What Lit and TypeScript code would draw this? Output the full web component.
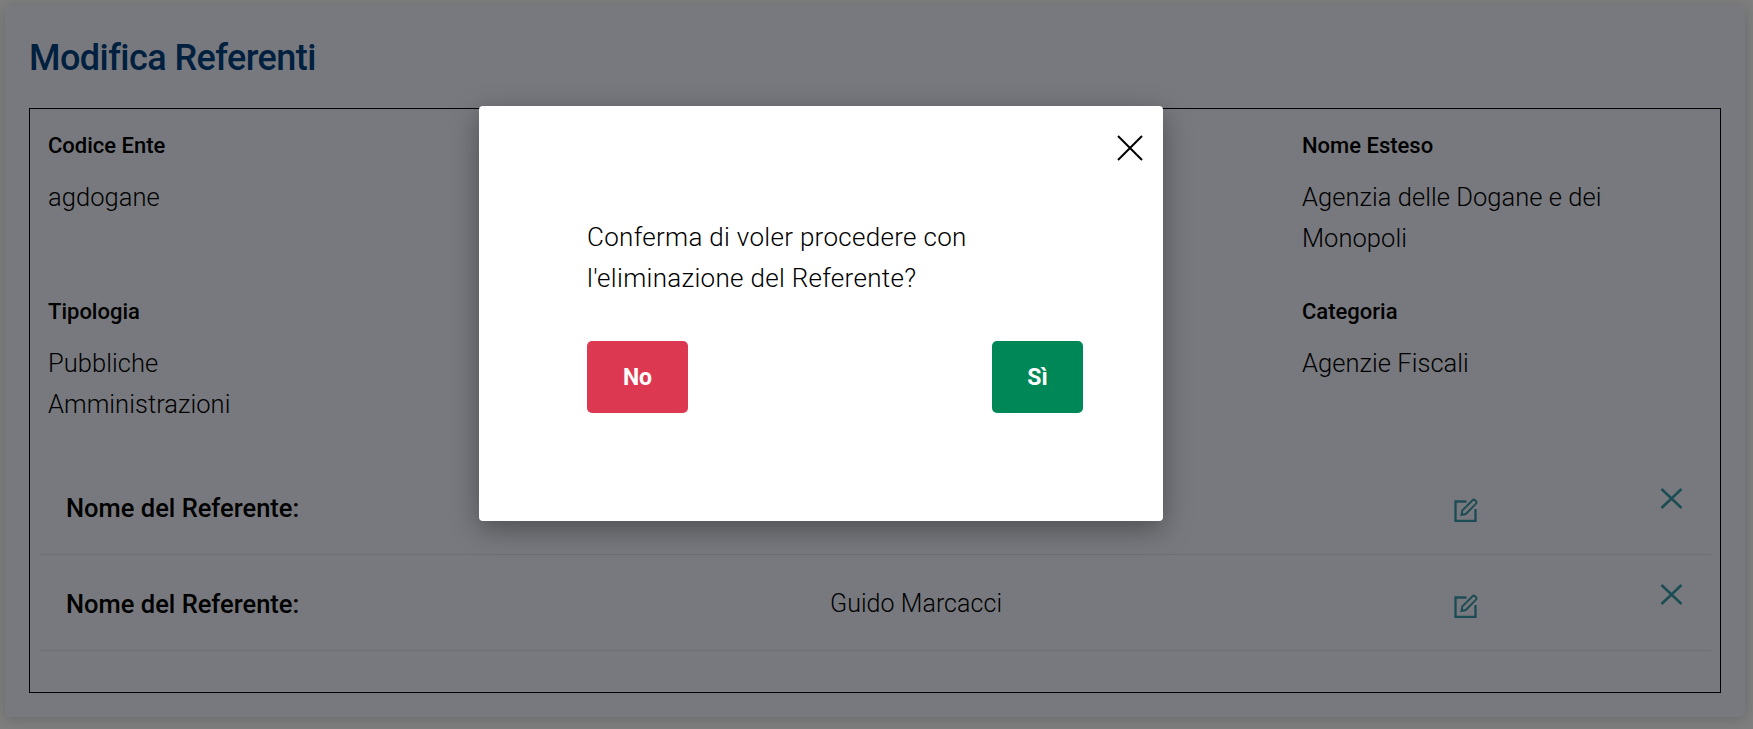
import { LitElement, html, css } from "lit";
import { customElement } from "lit/decorators.js";

const editIcon = html`<svg class="edit" viewBox="0 0 24 24" fill="none" stroke="currentColor" stroke-width="2.4">
  <path d="M12.5 3.5H1.5V23H21.5V11"/>
  <path d="M7.5 17l.8-4.6L18.6 2.2c.7-.7 1.8-.7 2.5 0l.9.9c.7.7.7 1.8 0 2.5L11.8 16z" stroke-width="2"/>
</svg>`;
const xIcon = html`<svg class="x" viewBox="0 0 23 21" fill="none" stroke="currentColor" stroke-width="2.6">
  <path d="M1.5 1L21.5 20M21.5 1L1.5 20"/>
</svg>`;

@customElement("app-root")
export class AppRoot extends LitElement {
  static styles = css`
    :host { display: block; width: 1753px; height: 729px; box-sizing: border-box; padding: 5px 8px 0 5px; position: relative; overflow: hidden; background: #fdfdfd; font-family: Roboto, "Noto Sans", sans-serif; color: #000; }
    .card { box-sizing: border-box; height: 712px; background: #f0f3fc; border-radius: 6px; box-shadow: 0 2px 14px rgba(0,0,0,.18); padding: 0 24px; }
    h1 { margin: 0; padding: 30px 0 0; height: 103px; box-sizing: border-box; font-size: 36px; line-height: 46px; font-weight: 500; letter-spacing: -0.55px; color: #004080; }
    .box { box-sizing: border-box; height: 585px; border: 1.5px solid #000; padding: 0 9px; }
    .info { display: grid; grid-template-columns: repeat(4, 418px); grid-auto-rows: 166px; padding: 13px 9px 0; height: 349.5px; box-sizing: border-box; }
    .label { font-size: 22px; font-weight: 500; line-height: 48px; }
    .value { font-size: 25.5px; font-weight: 300; line-height: 41px; white-space: nowrap; margin-top: 7px; letter-spacing: 0.05px; }
    .row { display: grid; grid-template-columns: 764px 624px 206px 1fr; height: 96px; border-bottom: 1px solid #dcdde2; box-sizing: border-box; padding-left: 27px; width: 1672px; }
    .name, .val { margin-top: 23px; line-height: 52px; }
    .name { font-size: 25.5px; font-weight: 500; }
    .val { font-size: 25px; font-weight: 300; letter-spacing: 0.05px; }
    .ic { color: #3b9aa8; }
    .edit-wrap { padding-top: 39px; }
    .x-wrap { padding-top: 29px; }
    .edit { display: block; width: 24px; height: 24px; }
    .x { display: block; width: 23px; height: 21px; }
    .overlay { position: absolute; inset: 0; background: rgba(0,0,0,.5); }
    .modal { position: absolute; left: 479px; top: 106px; width: 684px; height: 415px; box-sizing: border-box; background: #fff; border-radius: 4px; box-shadow: 0 8px 28px rgba(0,0,0,.35); padding: 111px 80px 0 108px; display: flex; flex-direction: column; }
    .close { position: absolute; right: 20px; top: 29px; width: 26px; height: 26px; padding: 0; border: 0; background: none; color: #000; }
    .close svg { display: block; width: 26px; height: 26px; }
    .msg { margin: 0; font-size: 26px; font-weight: 300; line-height: 41px; letter-spacing: 0.3px; color: #000; }
    .btns { display: flex; justify-content: space-between; margin-top: 42px; }
    .btn { height: 72px; border: 0; border-radius: 5px; color: #fff; font: 700 23px Roboto, sans-serif; padding: 0; }
    .no { width: 101px; background: #dc3851; }
    .yes { width: 91px; background: #008758; }
  `;

  render() {
    const ref = (v: string) => html`<div class="row">
        <div class="name">Nome del Referente:</div>
        <div class="val">${v}</div>
        <div class="ic edit-wrap">${editIcon}</div>
        <div class="ic x-wrap">${xIcon}</div>
      </div>`;
    return html`
      <div class="card">
        <h1>Modifica Referenti</h1>
        <div class="box">
          <div class="info">
            <div><div class="label">Codice Ente</div><div class="value">agdogane</div></div>
            <div></div><div></div>
            <div><div class="label">Nome Esteso</div><div class="value">Agenzia delle Dogane e dei<br />Monopoli</div></div>
            <div><div class="label">Tipologia</div><div class="value">Pubbliche<br />Amministrazioni</div></div>
            <div></div><div></div>
            <div><div class="label">Categoria</div><div class="value">Agenzie Fiscali</div></div>
          </div>
          ${ref("")}
          ${ref("Guido Marcacci")}
        </div>
      </div>
      <div class="overlay"></div>
      <div class="modal" role="dialog">
        <button class="close" aria-label="Chiudi"><svg viewBox="0 0 26 26" fill="none" stroke="currentColor" stroke-width="2"><path d="M1 1L25 25M25 1L1 25"/></svg></button>
        <p class="msg">Conferma di voler procedere con<br />l'eliminazione del Referente?</p>
        <div class="btns"><button class="btn no">No</button><button class="btn yes">Sì</button></div>
      </div>
    `;
  }
}
